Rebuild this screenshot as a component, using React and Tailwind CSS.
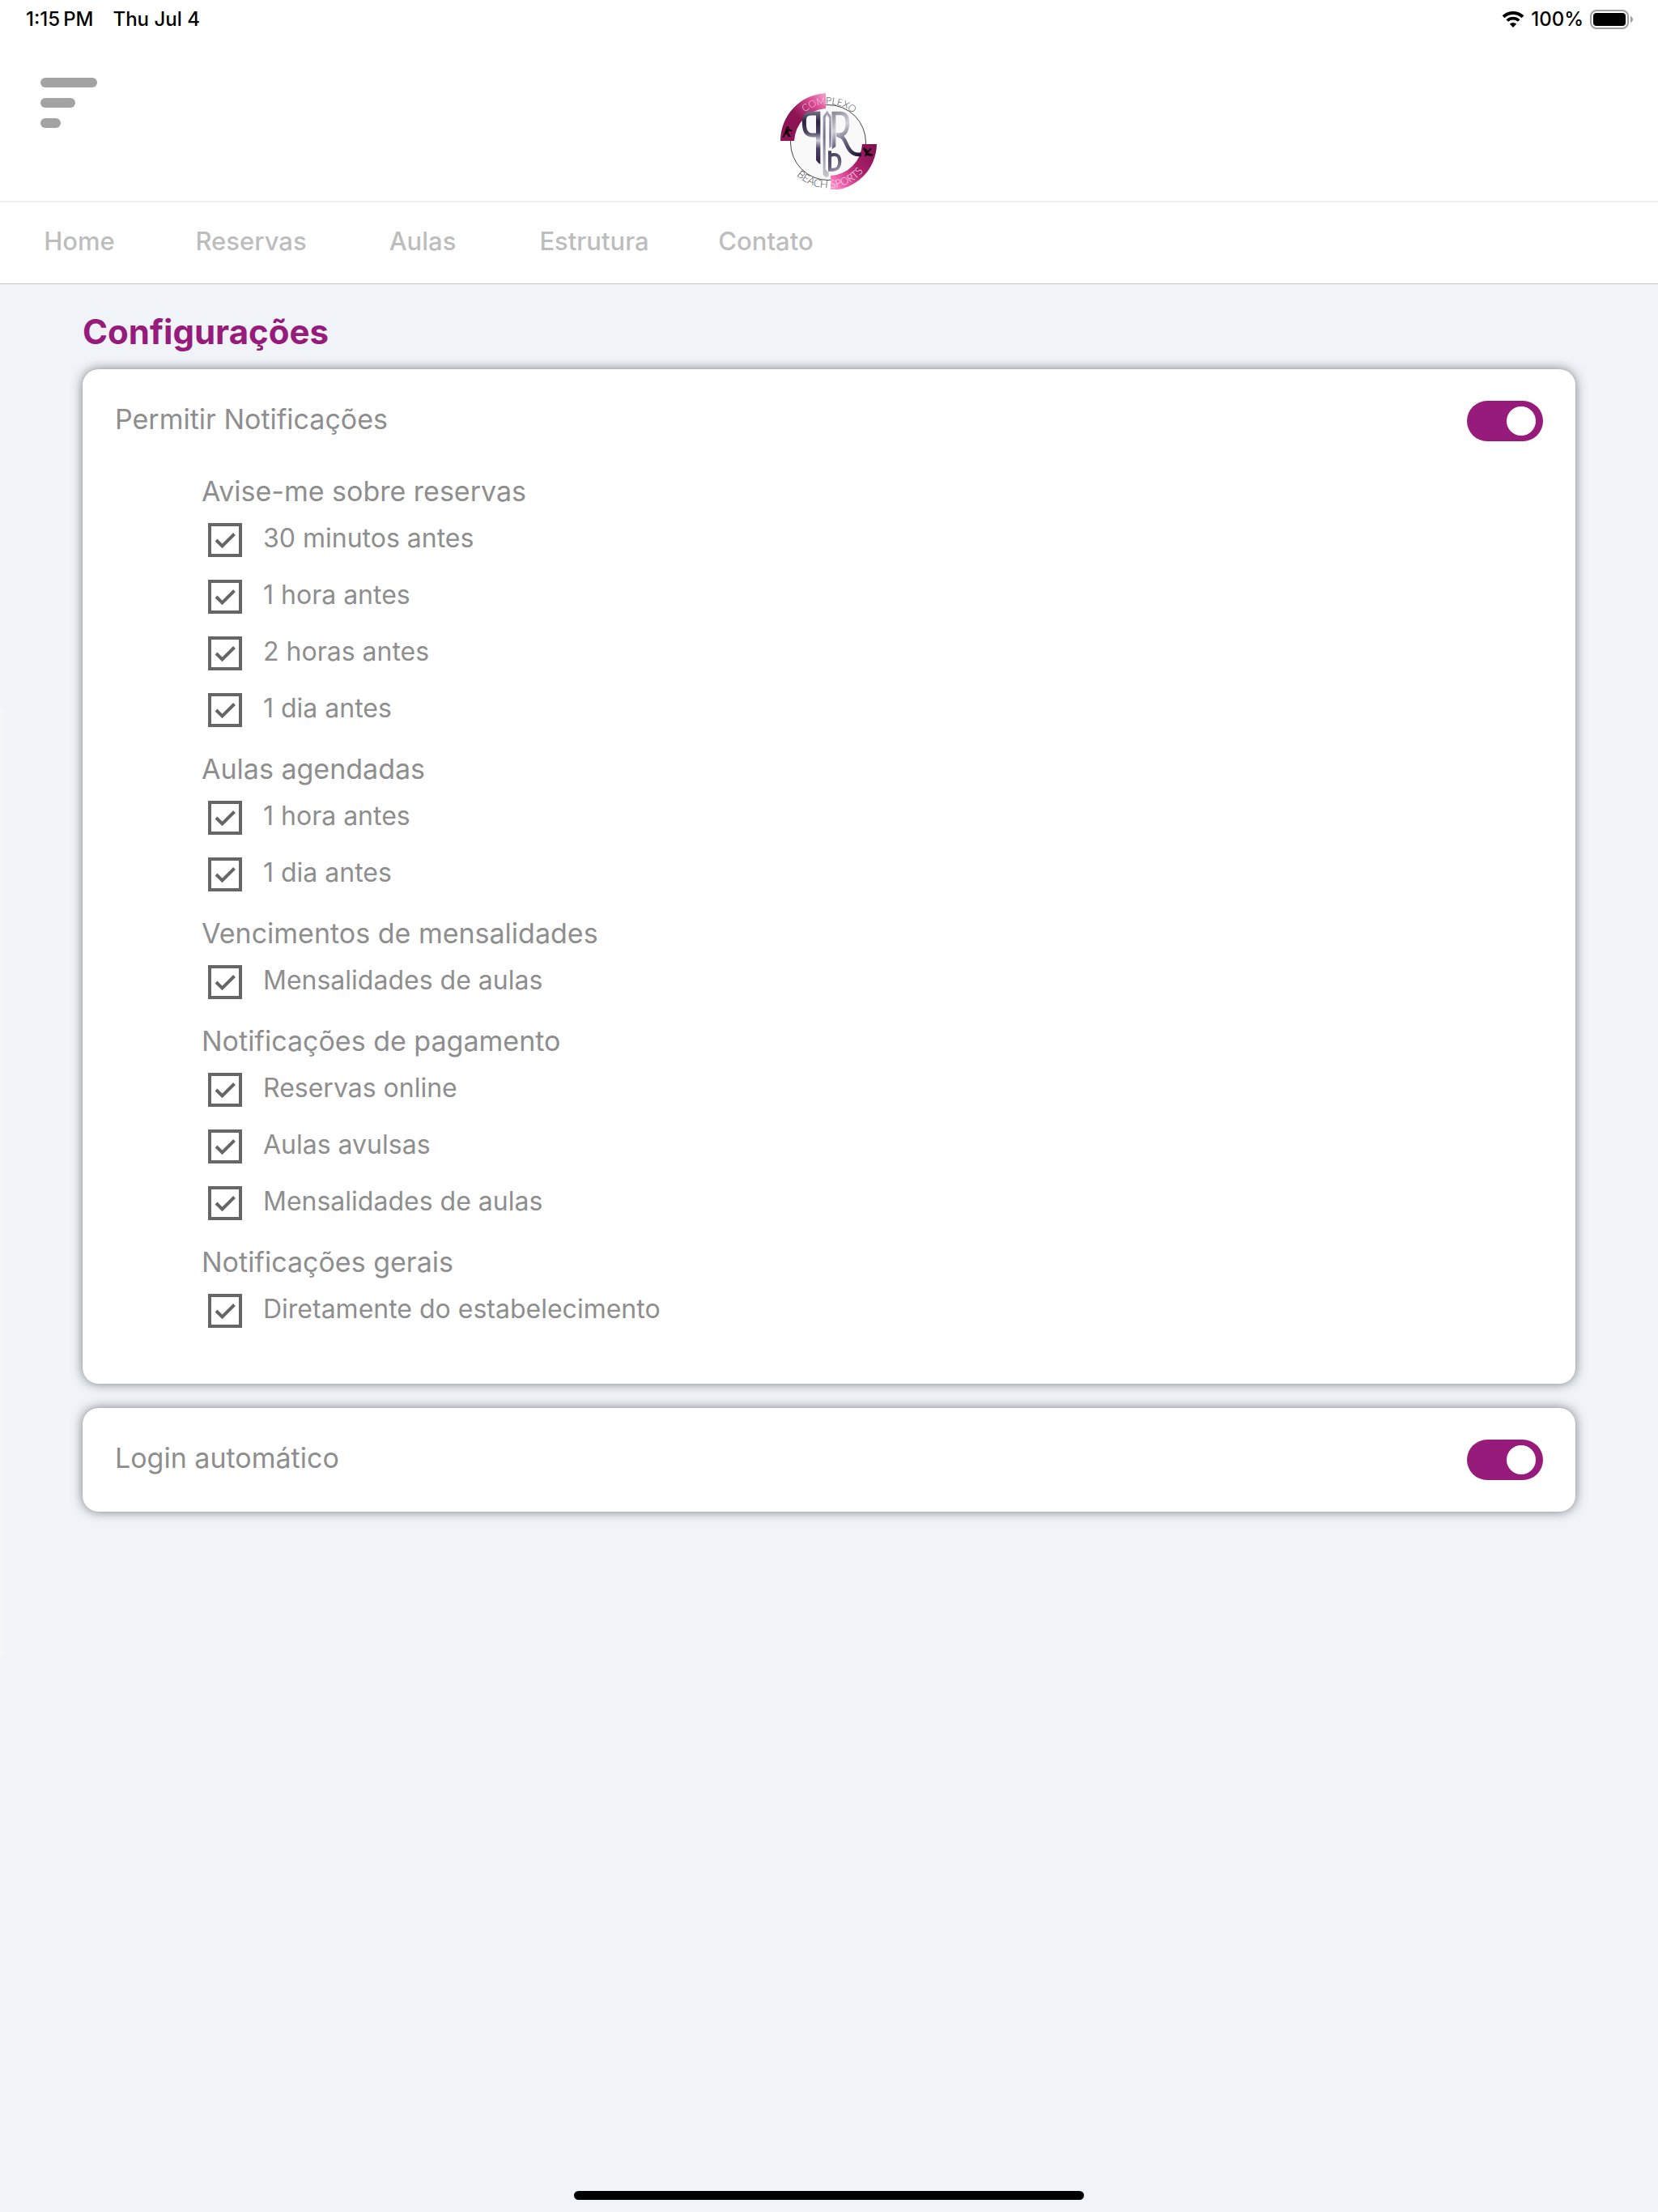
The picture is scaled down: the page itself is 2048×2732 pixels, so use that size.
const groups = [
  { title: "Avise-me sobre reservas", items: ["30 minutos antes", "1 hora antes", "2 horas antes", "1 dia antes"] },
  { title: "Aulas agendadas", items: ["1 hora antes", "1 dia antes"] },
  { title: "Vencimentos de mensalidades", items: ["Mensalidades de aulas"] },
  { title: "Notificações de pagamento", items: ["Reservas online", "Aulas avulsas", "Mensalidades de aulas"] },
  { title: "Notificações gerais", items: ["Diretamente do estabelecimento"] },
];

const links = ["Home", "Reservas", "Aulas", "Estrutura", "Contato"];

function StatusBar() {
  return (
    <div className="flex h-12 items-center justify-between pr-[30px] pl-8 text-[24px] font-medium text-black">
      <div className="flex gap-6">
        <span>{"1:15\u202fPM"}</span>
        <span>Thu Jul 4</span>
      </div>
      <div className="flex items-center gap-2">
        <svg width="28" height="20" viewBox="0 0 28 20" aria-hidden="true">
          <path d="M2 6.8 A17.3 17.3 0 0 1 26 6.8" fill="none" stroke="#000" strokeWidth="4" />
          <path d="M6.8 11.5 A10.4 10.4 0 0 1 21.2 11.5" fill="none" stroke="#000" strokeWidth="3.8" />
          <path d="M14 20 L9.8 15.6 A6.2 6.2 0 0 1 18.2 15.6 Z" fill="#000" />
        </svg>
        <span>100%</span>
        <svg width="54" height="24" viewBox="0 0 54 24" aria-hidden="true">
          <rect x="1" y="1" width="46" height="22" rx="7" fill="none" stroke="#a0a0a0" strokeWidth="2" />
          <rect x="4" y="4" width="40" height="16" rx="4" fill="#000" />
          <path d="M50 8 C54 9.5 54 14.5 50 16 Z" fill="#a0a0a0" />
        </svg>
      </div>
    </div>
  );
}

function Logo() {
  return (
    <svg width="120" height="120" viewBox="15 13 120 120" role="img" aria-label="Complexo Beach Sports">
      <defs>
        <linearGradient id="bandA" x1="0" y1="1" x2="1" y2="0">
          <stop offset="0" stopColor="#8d1557" />
          <stop offset="0.45" stopColor="#8d1453" />
          <stop offset="0.75" stopColor="#d8488f" />
          <stop offset="1" stopColor="#f9a3cf" />
        </linearGradient>
        <linearGradient id="bandB" x1="1" y1="0" x2="0" y2="1">
          <stop offset="0" stopColor="#7d1150" />
          <stop offset="0.45" stopColor="#a81f68" />
          <stop offset="0.8" stopColor="#f05fae" />
          <stop offset="1" stopColor="#ffa5d4" />
        </linearGradient>
        <linearGradient id="metalP" gradientUnits="userSpaceOnUse" x1="0" y1="108" x2="0" y2="308">
          <stop offset="0" stopColor="#77778a" />
          <stop offset="0.2" stopColor="#2d2142" />
          <stop offset="0.4" stopColor="#4a4260" />
          <stop offset="0.55" stopColor="#d0d0da" />
          <stop offset="0.7" stopColor="#4a4162" />
          <stop offset="1" stopColor="#2d2142" />
        </linearGradient>
        <linearGradient id="metalI" gradientUnits="userSpaceOnUse" x1="0" y1="105" x2="0" y2="355">
          <stop offset="0" stopColor="#aaaab6" />
          <stop offset="0.4" stopColor="#73708a" />
          <stop offset="0.6" stopColor="#9997a8" />
          <stop offset="1" stopColor="#c6c6ce" />
        </linearGradient>
        <linearGradient id="metalR" gradientUnits="userSpaceOnUse" x1="235" y1="110" x2="335" y2="275">
          <stop offset="0" stopColor="#85838f" />
          <stop offset="0.35" stopColor="#d2d2da" />
          <stop offset="0.6" stopColor="#6d6984" />
          <stop offset="1" stopColor="#1f1436" />
        </linearGradient>
        <linearGradient id="metalB" gradientUnits="userSpaceOnUse" x1="225" y1="262" x2="270" y2="340">
          <stop offset="0" stopColor="#4a4162" />
          <stop offset="0.5" stopColor="#5d5674" />
          <stop offset="1" stopColor="#c2c2cc" />
        </linearGradient>
        <path id="arcTop" d="M29.4 58.800 A47.500 47.500 0 0 1 118.600 58.800" />
        <path id="arcBottom" d="M18.800 84.700 A56 56 0 0 0 129.200 84.700" />
      </defs>
      <circle cx="74" cy="75" r="46.500" fill="#f9f9fa" stroke="#333" strokeWidth="0.9" />
      <path d="M71 14 A59 59 0 0 0 15 73 H32 A42 42 0 0 1 71 33 Z" fill="url(#bandA)" />
      <path d="M77 134 A58 58 0 0 0 134 77 H116 A41 41 0 0 1 77 116 Z" fill="url(#bandB)" />
      <g transform="scale(0.33333)" fill="none">
        <path d="M192 117 H160 C138 117 133 128 133 150 C133 185 142 198 166 198 H178" stroke="url(#metalP)" strokeWidth="15" />
        <path d="M177 112 H193 V306 L185 300 L177 290 Z" fill="url(#metalP)" />
        <path d="M203 128 L218 107 L233 128 V240 L226 246 V135 L218 122 L212 133 V325 L224 337 V350 L214 355 L203 344 Z" fill="url(#metalI)" />
        <path d="M236 112 H250 V240 L236 250 Z" fill="url(#metalR)" />
        <path d="M236 117 H268 C287 117 293 130 293 152 C293 184 284 197 262 197 H252" stroke="url(#metalR)" strokeWidth="14" />
        <path d="M258 199 C282 202 284 222 296 244 C308 266 322 272 345 269" stroke="url(#metalR)" strokeWidth="14" />
        <path d="M228 256 V326 H240 C258 326 265 312 265 296 C265 276 256 268 240 270 L228 274" stroke="url(#metalB)" strokeWidth="12" />
      </g>
      <path d="M24 55 a1.700 1.700 0 1 0 0.100 0 M22 57 L26 58 L25 63 L28 68 H25 L22 64 L19 69 H17.500 L20 63 Z M25 58 L30 60 L29 61.500 L24 60 Z" fill="#14040e" />
      <path d="M118 81 L122 84 L124 88 L130 90 L128 92 L122 91 L119 92 L120 88 L117 83 Z M126 82 L128 83 L124 87 L122 86 Z" fill="#14040e" />
      <g fontFamily="Lato, sans-serif" fontWeight="300" fill="#3b3b3f" textAnchor="middle">
        <text fontSize="12">
          <textPath href="#arcTop" startOffset="51%"><tspan fill="#fbd3e8">COM</tspan><tspan>PLEXO</tspan></textPath>
        </text>
        <text fontSize="13">
          <textPath href="#arcBottom" startOffset="52%"><tspan>BEACH </tspan><tspan fill="#fde3f0">SPORTS</tspan></textPath>
        </text>
      </g>
    </svg>
  );
}

function Toggle({ label }) {
  return (
    <label className="flex h-[54px] items-center justify-between text-[34px] leading-[50px]">
      <span className="pb-1">{label}</span>
      <span className="relative flex">
        <input type="checkbox" role="switch" defaultChecked className="peer h-[50px] w-[94px] appearance-none rounded-full bg-gray-300 checked:bg-[#961b7a]" />
        <span className="pointer-events-none absolute top-[7px] right-[51px] size-9 rounded-full bg-white peer-checked:right-[9px]" />
      </span>
    </label>
  );
}

function CheckItem({ label }) {
  return (
    <label className="flex h-[70px] items-center gap-[26px] pl-2 text-[32px]">
      <span className="relative flex">
        <input type="checkbox" defaultChecked className="peer size-[42px] appearance-none border-4 border-[#666]" />
        <svg className="pointer-events-none absolute inset-0 hidden peer-checked:block" width="42" height="42" viewBox="0 0 42 42" fill="none" stroke="#666" strokeWidth="4" aria-hidden="true">
          <path d="M10 21 L17.500 28.500 L32.500 13.500" />
        </svg>
      </span>
      <span className="pb-1">{label}</span>
    </label>
  );
}

export default function App() {
  return (
    <div className="relative flex min-h-screen flex-col overflow-hidden bg-[#f0f4f8] font-[Inter,'Liberation_Sans',sans-serif] text-[#8e8e8e]">
      <header className="bg-white">
        <StatusBar />
        <div className="grid h-[202px] grid-cols-3 items-start border-b-2 border-[#eee] px-[50px]">
          <button type="button" aria-label="Menu" className="mt-12 flex w-[70px] flex-col gap-[13px]">
            <span className="h-3 w-[70px] rounded-full bg-[#a3a3a3]" />
            <span className="h-3 w-[43px] rounded-full bg-[#a3a3a3]" />
            <span className="h-3 w-[25px] rounded-full bg-[#a3a3a3]" />
          </button>
          <div className="mt-[66px] justify-self-center">
            <Logo />
          </div>
        </div>
        <nav className="-ml-2 flex h-[101px] items-center border-b border-[#c8c8c8] pb-1 text-[31px] font-medium text-[#bdbdbd]">
          {links.map((link) => (
            <a key={link} href="#" className="w-[212px] text-center">
              {link}
            </a>
          ))}
        </nav>
      </header>
      <main className="flex-1 px-[102px] pt-8">
        <h1 className="mb-5 text-[42px] leading-[53px] font-bold text-[#961b7a]">Configurações</h1>
        <section className="rounded-[20px] bg-white px-10 pt-[37px] pb-[55px] shadow-[0_0_14px_rgba(0,0,0,0.5)]">
          <Toggle label="Permitir Notificações" />
          <div className="mt-[22px] pl-[107px]">
            {groups.map((group) => (
              <fieldset key={group.title}>
                <legend className="h-[63px] pt-[13px] text-[34px] leading-[50px]">{group.title}</legend>
                {group.items.map((item) => (
                  <CheckItem key={item} label={item} />
                ))}
              </fieldset>
            ))}
          </div>
        </section>
        <section className="mt-[30px] rounded-[20px] bg-white px-10 py-[37px] shadow-[0_0_14px_rgba(0,0,0,0.5)]">
          <Toggle label="Login automático" />
        </section>
      </main>
      <div className="mx-auto mb-[15px] h-[11px] w-[630px] rounded-full bg-black" />
      <div className="pointer-events-none absolute top-[872px] left-0 h-[1176px] w-1 bg-white/60 blur-[3px]" />
    </div>
  );
}
